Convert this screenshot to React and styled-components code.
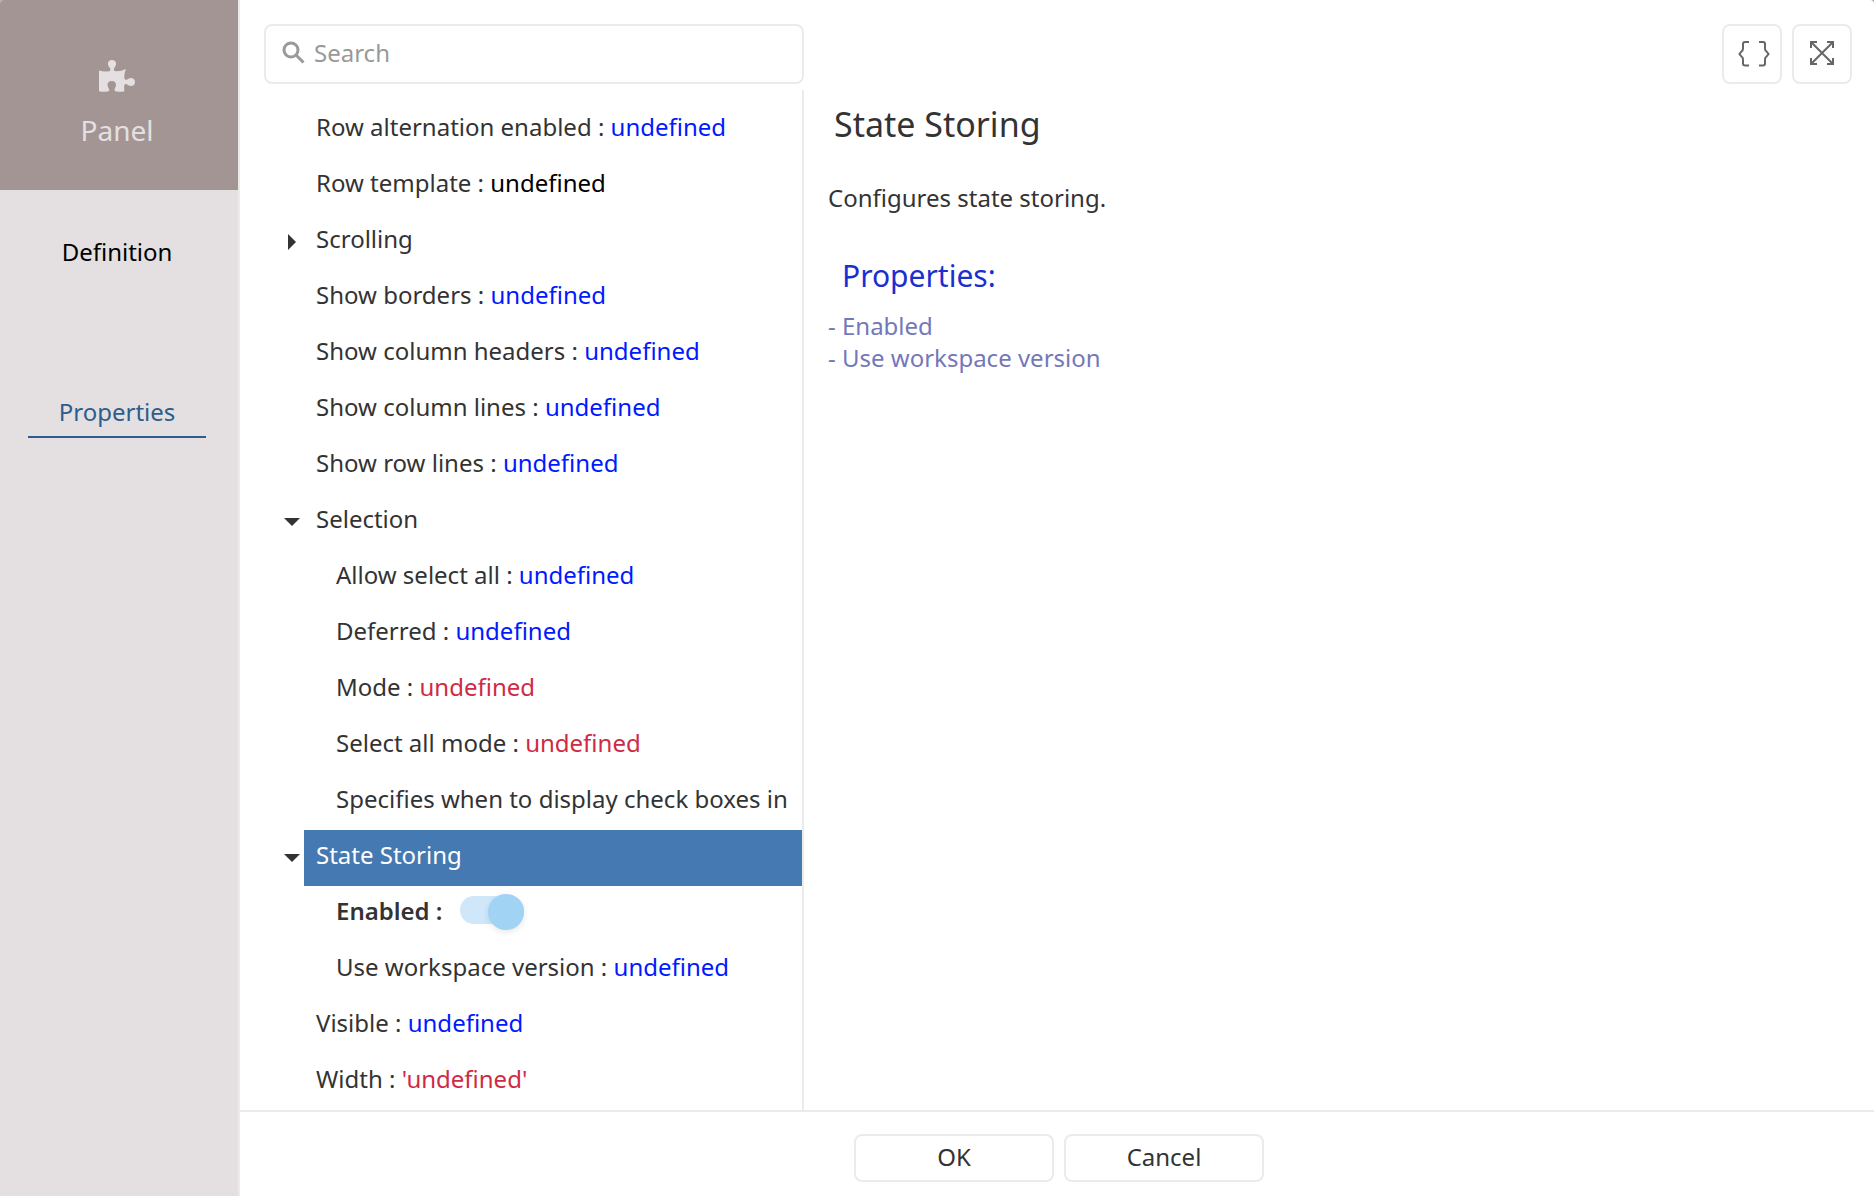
import React, { useState } from "react";
import styled, { createGlobalStyle } from "styled-components";

const LINE = "#ebebeb";
const INK = "#333333";

const GlobalStyle = createGlobalStyle`
  *, *::before, *::after { box-sizing: border-box; }
  body {
    margin: 0;
    background: #a5abae;
    color: ${INK};
    font-family: "Noto Sans", "Open Sans", sans-serif;
    font-size: 24px;
    line-height: 32px;
  }
  button, input { font: inherit; color: inherit; }
`;

const Dialog = styled.div`
  display: flex;
  min-height: 100vh;
  overflow: hidden;
  background: #ffffff;
  border-radius: 4px 4px 0 0;
`;

const Sidebar = styled.aside`
  flex: 0 0 240px;
  border-right: 2px solid ${LINE};
  background: #e4e0e1;
`;

const SidebarHeader = styled.header`
  display: flex;
  flex-direction: column;
  align-items: center;
  gap: 22px;
  height: 190px;
  padding: 60px 4px 0 0;
  background: #a39594;
  color: #e4e0e1;
  font-size: 28px;
`;

const Tabs = styled.nav`
  display: flex;
  flex-direction: column;
  gap: 118px;
  padding: 46px 32px 0 28px;
`;

const Tab = styled.button`
  padding: 0 0 8px;
  border: 0;
  border-bottom: 2px solid ${(p) => (p.$active ? "#2d5d8d" : "transparent")};
  background: none;
  color: ${(p) => (p.$active ? "#2d5d8d" : "#000000")};
  text-align: center;
`;

const Main = styled.main`
  display: flex;
  flex: 1;
  flex-direction: column;
  min-width: 0;
`;

const Toolbar = styled.div`
  display: flex;
  justify-content: space-between;
  padding: 24px 22px 6px 24px;
`;

const SearchBox = styled.label`
  display: flex;
  align-items: center;
  gap: 8px;
  width: 540px;
  height: 60px;
  padding: 0 16px 2px;
  border: 2px solid ${LINE};
  border-radius: 8px;
  color: #999999;
`;

const SearchInput = styled.input`
  flex: 1;
  min-width: 0;
  padding: 0;
  border: 0;
  outline: 0;
  background: none;
  color: ${INK};
  &::placeholder { color: #999999; opacity: 1; }
`;

const ToolButtons = styled.div`
  display: flex;
  gap: 10px;
`;

const IconButton = styled.button`
  display: grid;
  place-items: center;
  width: 60px;
  height: 60px;
  padding: 0 0 2px;
  border: 2px solid ${LINE};
  border-radius: 8px;
  background: #ffffff;
  color: #666666;
`;

const Body = styled.div`
  display: flex;
  flex: 1;
`;

const Tree = styled.ul`
  flex: 0 0 564px;
  margin: 0;
  padding: 12px 0 0 40px;
  overflow: hidden;
  border-right: 2px solid ${LINE};
  list-style: none;
`;

const TreeRow = styled.li`
  display: flex;
  height: 56px;
`;

const Expander = styled.button`
  display: grid;
  flex: 0 0 24px;
  place-items: center;
  padding: 0;
  border: 0;
  background: none;
`;

const ExpanderSpace = styled.span`
  flex: 0 0 24px;
`;

const NodeContent = styled.div`
  display: flex;
  flex: 1;
  align-items: center;
  min-width: 0;
  padding: 0 0 6px ${(p) => (p.$level ? 32 : 12)}px;
  overflow: hidden;
  background: ${(p) => (p.$selected ? "#4579b2" : "transparent")};
  color: ${(p) => (p.$selected ? "#ffffff" : INK)};
  font-weight: ${(p) => (p.$strong ? 600 : 400)};
  white-space: pre;
`;

const valueColors = { bool: "#0019ff", text: "#cf2a45", plain: "#000000" };

const Value = styled.span`
  color: ${(p) => valueColors[p.$kind]};
`;

const Switch = styled.input`
  appearance: none;
  width: 64px;
  height: 28px;
  margin: 0 0 2px 17px;
  border-radius: 14px;
  background: #cfe7f9;
  &::before {
    content: "";
    display: block;
    width: 36px;
    height: 36px;
    margin: -2px 0 0 ${(p) => (p.checked ? 28 : 0)}px;
    border-radius: 50%;
    background: #a1d3f5;
    box-shadow: 0 2px 6px rgba(0, 0, 0, 0.1);
  }
`;

const Details = styled.section`
  flex: 1;
  min-width: 0;
  padding: 14px 24px;
`;

const Title = styled.h1`
  margin: 0 0 38px;
  padding-left: 6px;
  font-size: 34px;
  font-weight: 400;
  line-height: 40px;
`;

const Description = styled.p`
  margin: 0 0 42px;
`;

const Subtitle = styled.h2`
  margin: 0 0 14px;
  padding-left: 14px;
  color: #1b2fd0;
  font-size: 30px;
  font-weight: 400;
  line-height: 40px;
`;

const PropertyList = styled.ul`
  margin: 0;
  padding: 0;
  list-style: none;
`;

const PropertyLink = styled.a`
  color: #7478ba;
  text-decoration: none;
`;

const Footer = styled.footer`
  display: flex;
  justify-content: center;
  gap: 10px;
  padding: 22px 0 14px 4px;
  border-top: 2px solid ${LINE};
`;

const FooterButton = styled.button`
  width: 200px;
  height: 48px;
  padding: 0 0 2px;
  border: 2px solid ${LINE};
  border-radius: 8px;
  background: #ffffff;
`;

const PuzzleIcon = () => (
  <svg width="36" height="32" viewBox="0 0 36 32" fill="currentColor" aria-hidden="true">
    <path d="M0 10.500Q5 12 9.500 11.300C12.500 10.800 11.500 8.500 10 6.800C7.500 3.500 9.500 0 13 0S18.500 3.500 16 6.800C14.500 8.800 14 11 17 11.300Q22 11.500 27 9Q25 13.500 25.300 17.500C25.600 20 27 20.500 29 19C32 16.800 36 18.300 36 22S32 27.300 29 25C27 23.500 25.500 23.500 25.200 26Q25 29 25.500 31.200Q21 32.300 17.500 31.500C14.500 30.800 15.500 29 16.300 27.500C18 24 16.500 21 12.800 21S7.500 24 9.200 27.500C10 29 11.500 30.800 8.500 31.500Q4.500 32.300 0 31.200Z" />
  </svg>
);

const SearchIcon = () => (
  <svg width="24" height="24" viewBox="0 0 24 24" fill="none" stroke="currentColor" strokeWidth="3" aria-hidden="true">
    <circle cx="9" cy="9" r="7" />
    <path d="M14 14L21.500 21.500" strokeWidth="3" />
  </svg>
);

const BracesIcon = () => (
  <svg width="36" height="28" viewBox="0 0 36 28" fill="none" stroke="currentColor" strokeWidth="2" aria-hidden="true">
    <path d="M15 3H11Q9 3 9 5V9.500Q9 11.500 7.500 12.500L5.500 15L7.500 17.500Q9 18.500 9 20.500V24.500Q9 26.500 11 26.500H15" />
    <path d="M25 3H29Q31 3 31 5V9.500Q31 11.500 32.500 12.500L34.500 15L32.500 17.500Q31 18.500 31 20.500V24.500Q31 26.500 29 26.500H25" />
  </svg>
);

const ExpandIcon = () => (
  <svg width="28" height="28" viewBox="0 0 28 28" fill="none" stroke="currentColor" strokeWidth="2" aria-hidden="true">
    <path d="M3 3L25 25M25 3L3 25M3 9V3H9M19 3H25V9M25 19V25H19M9 25H3V19" />
  </svg>
);

const Caret = ({ open }) => (
  <svg width="16" height="16" viewBox="0 0 16 16" fill={INK} aria-hidden="true">
    <path d={open ? "M0 4H16L8 12Z" : "M4 0L12 8L4 16Z"} />
  </svg>
);

const nodes = [
  { label: "Row alternation enabled", value: "undefined", kind: "bool" },
  { label: "Row template", value: "undefined", kind: "plain" },
  { label: "Scrolling", group: true },
  { label: "Show borders", value: "undefined", kind: "bool" },
  { label: "Show column headers", value: "undefined", kind: "bool" },
  { label: "Show column lines", value: "undefined", kind: "bool" },
  { label: "Show row lines", value: "undefined", kind: "bool" },
  { label: "Selection", group: true, open: true },
  { label: "Allow select all", value: "undefined", kind: "bool", level: 1 },
  { label: "Deferred", value: "undefined", kind: "bool", level: 1 },
  { label: "Mode", value: "undefined", kind: "text", level: 1 },
  { label: "Select all mode", value: "undefined", kind: "text", level: 1 },
  { label: "Specifies when to display check boxes in", level: 1 },
  { label: "State Storing", group: true, open: true, selected: true },
  { label: "Enabled", toggle: true, level: 1 },
  { label: "Use workspace version", value: "undefined", kind: "bool", level: 1 },
  { label: "Visible", value: "undefined", kind: "bool" },
  { label: "Width", value: "'undefined'", kind: "text" },
];

function TreeNode({ node }) {
  const [on, setOn] = useState(true);
  return (
    <TreeRow>
      {node.group ? (
        <Expander type="button" aria-label={node.label} aria-expanded={!!node.open}>
          <Caret open={node.open} />
        </Expander>
      ) : (
        <ExpanderSpace />
      )}
      <NodeContent $level={node.level} $selected={node.selected} $strong={node.toggle}>
        {node.toggle ? (
          <>
            <label htmlFor="enabled">{node.label} :</label>
            <Switch id="enabled" type="checkbox" checked={on} onChange={(e) => setOn(e.target.checked)} />
          </>
        ) : (
          <span>
            {node.label}
            {node.value && " : "}
            {node.value && <Value $kind={node.kind}>{node.value}</Value>}
          </span>
        )}
      </NodeContent>
    </TreeRow>
  );
}

export default function App() {
  return (
    <>
      <GlobalStyle />
      <Dialog>
        <Sidebar>
          <SidebarHeader>
            <PuzzleIcon />
            <span>Panel</span>
          </SidebarHeader>
          <Tabs>
            <Tab type="button">Definition</Tab>
            <Tab type="button" $active>Properties</Tab>
          </Tabs>
        </Sidebar>
        <Main>
          <Toolbar>
            <SearchBox>
              <SearchIcon />
              <SearchInput type="text" placeholder="Search" aria-label="Search" />
            </SearchBox>
            <ToolButtons>
              <IconButton type="button" aria-label="Edit as JSON"><BracesIcon /></IconButton>
              <IconButton type="button" aria-label="Full screen"><ExpandIcon /></IconButton>
            </ToolButtons>
          </Toolbar>
          <Body>
            <Tree>
              {nodes.map((node) => <TreeNode key={node.label} node={node} />)}
            </Tree>
            <Details>
              <Title>State Storing</Title>
              <Description>Configures state storing.</Description>
              <Subtitle>Properties:</Subtitle>
              <PropertyList>
                <li><PropertyLink href="#enabled">- Enabled</PropertyLink></li>
                <li><PropertyLink href="#version">- Use workspace version</PropertyLink></li>
              </PropertyList>
            </Details>
          </Body>
          <Footer>
            <FooterButton type="button">OK</FooterButton>
            <FooterButton type="button">Cancel</FooterButton>
          </Footer>
        </Main>
      </Dialog>
    </>
  );
}
